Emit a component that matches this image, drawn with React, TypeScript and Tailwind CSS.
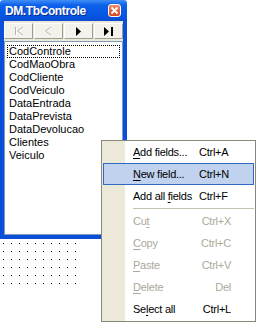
const fields = [
  'CodControle',
  'CodMaoObra',
  'CodCliente',
  'CodVeiculo',
  'DataEntrada',
  'DataPrevista',
  'DataDevolucao',
  'Clientes',
  'Veiculo',
]

type Item = {
  pre: string
  key: string
  post: string
  shortcut: string
  disabled?: boolean
  active?: boolean
  alignRight?: boolean
}

const topItems: Item[] = [
  { pre: '', key: 'A', post: 'dd fields...', shortcut: 'Ctrl+A' },
  { pre: '', key: 'N', post: 'ew field...', shortcut: 'Ctrl+N', active: true },
  { pre: 'Add all ', key: 'f', post: 'ields', shortcut: 'Ctrl+F' },
]

const bottomItems: Item[] = [
  { pre: 'Cu', key: 't', post: '', shortcut: 'Ctrl+X', disabled: true, alignRight: true },
  { pre: '', key: 'C', post: 'opy', shortcut: 'Ctrl+C', disabled: true, alignRight: true },
  { pre: '', key: 'P', post: 'aste', shortcut: 'Ctrl+V', disabled: true, alignRight: true },
  { pre: '', key: 'D', post: 'elete', shortcut: 'Del', disabled: true, alignRight: true },
  { pre: 'Se', key: 'l', post: 'ect all', shortcut: 'Ctrl+L', alignRight: true },
]

function MenuRow({ item }: { item: Item }) {
  return (
    <div
      className={`mx-[1px] h-[22px] flex items-center pl-[29px] border ${
        item.active ? 'border-[#316ac5] bg-[#c1d2ee]' : 'border-transparent'
      } ${item.disabled ? 'text-[#aca899]' : 'text-black'}`}
    >
      <span className="w-[66px] whitespace-nowrap">
        {item.pre}
        <span className="underline underline-offset-[2px]">{item.key}</span>
        {item.post}
      </span>
      <span className={`w-[32px] whitespace-nowrap ${item.alignRight ? 'text-right' : 'text-left'}`}>
        {item.shortcut}
      </span>
    </div>
  )
}

function NavButton({ children }: { children: React.ReactNode }) {
  return (
    <div className="flex-1 h-[16px] flex items-center justify-center bg-[#f3f2ec] border border-t-white border-l-white border-b-[#a09d8f] border-r-[#a09d8f]">
      {children}
    </div>
  )
}

export default function App() {
  return (
    <div className="relative w-[256px] h-[323px] overflow-hidden bg-white font-['Liberation_Sans',Arial,sans-serif] text-[11px]">
      {/* tool window */}
      <div className="w-[127px] h-[239px] flex flex-col">
        <div className="h-[21px] flex items-center justify-between pl-[5px] pr-[6px] rounded-t-[3px] bg-[linear-gradient(#3f8ef7,#0c60ea_25%,#0656e2_75%,#0a4ccf)]">
          <span className="text-white font-bold text-[12px] tracking-[-0.4px] [text-shadow:1px_1px_0_#0a2c9a]">
            DM.TbControle
          </span>
          <div className="w-[13px] h-[13px] rounded-[3px] border border-white bg-[linear-gradient(#ef8a66,#d8461f)] flex items-center justify-center">
            <svg width="9" height="9" viewBox="0 0 9 9">
              <path d="M1.5 1.5 L7.5 7.5 M7.5 1.5 L1.5 7.5" stroke="white" strokeWidth="1.8" />
            </svg>
          </div>
        </div>
        <div className="flex-1 flex flex-col bg-[#ece9d8] border-l-[4px] border-r-[4px] border-b-[4px] border-[#0a4ed9]">
          <div className="mt-[2px] flex gap-[1px]">
            <NavButton>
              <svg width="12" height="10" viewBox="0 0 12 10">
                <path d="M2.5 1 V9 M10 1 L4.5 5 L10 9" fill="none" stroke="white" strokeWidth="1" transform="translate(1 1)" />
                <path d="M2.5 1 V9 M10 1 L4.5 5 L10 9" fill="none" stroke="#b9b6a8" strokeWidth="1" />
              </svg>
            </NavButton>
            <NavButton>
              <svg width="9" height="10" viewBox="0 0 9 10">
                <path d="M7 1 L1.5 5 L7 9" fill="none" stroke="white" strokeWidth="1" transform="translate(1 1)" />
                <path d="M7 1 L1.5 5 L7 9" fill="none" stroke="#b9b6a8" strokeWidth="1" />
              </svg>
            </NavButton>
            <NavButton>
              <svg width="7" height="9" viewBox="0 0 7 9">
                <path d="M1 0 L6 4.5 L1 9 Z" fill="black" />
              </svg>
            </NavButton>
            <NavButton>
              <svg width="11" height="9" viewBox="0 0 11 9">
                <path d="M1 0 L6 4.5 L1 9 Z" fill="black" />
                <rect x="8" y="0" width="2" height="9" fill="black" />
              </svg>
            </NavButton>
          </div>
          <div className="mt-[2px] flex-1 bg-white border border-[#7f9db9] pt-[3px]">
            {fields.map((f, i) => (
              <div
                key={f}
                className={`mx-[2px] h-[13px] leading-[11px] pl-[1px] border whitespace-nowrap text-[11px] ${
                  i === 0 ? 'border-dotted border-black' : 'border-transparent'
                }`}
              >
                {f}
              </div>
            ))}
          </div>
        </div>
      </div>

      {/* form designer grid */}
      <div className="w-[80px] grid grid-cols-10">
        {Array.from({ length: 60 }).map((_, i) => (
          <div key={i} className="w-[8px] h-[8px] pl-[3px] pt-[4px]">
            <div className="w-[1px] h-[1px] bg-black" />
          </div>
        ))}
      </div>

      {/* context menu */}
      <div className="absolute left-[101px] top-[140px] w-[155px] h-[182px] border border-[#8a877b] bg-[linear-gradient(to_right,#ece9d8_23px,#ffffff_23px)] tracking-[-0.25px]">
        {topItems.map((it) => (
          <MenuRow key={it.shortcut} item={it} />
        ))}
        <div className="h-[3px] flex items-center">
          <div className="ml-[31px] mr-[1px] flex-1 h-px bg-[#c5c2b2]" />
        </div>
        {bottomItems.map((it) => (
          <MenuRow key={it.shortcut} item={it} />
        ))}
      </div>
    </div>
  )
}
